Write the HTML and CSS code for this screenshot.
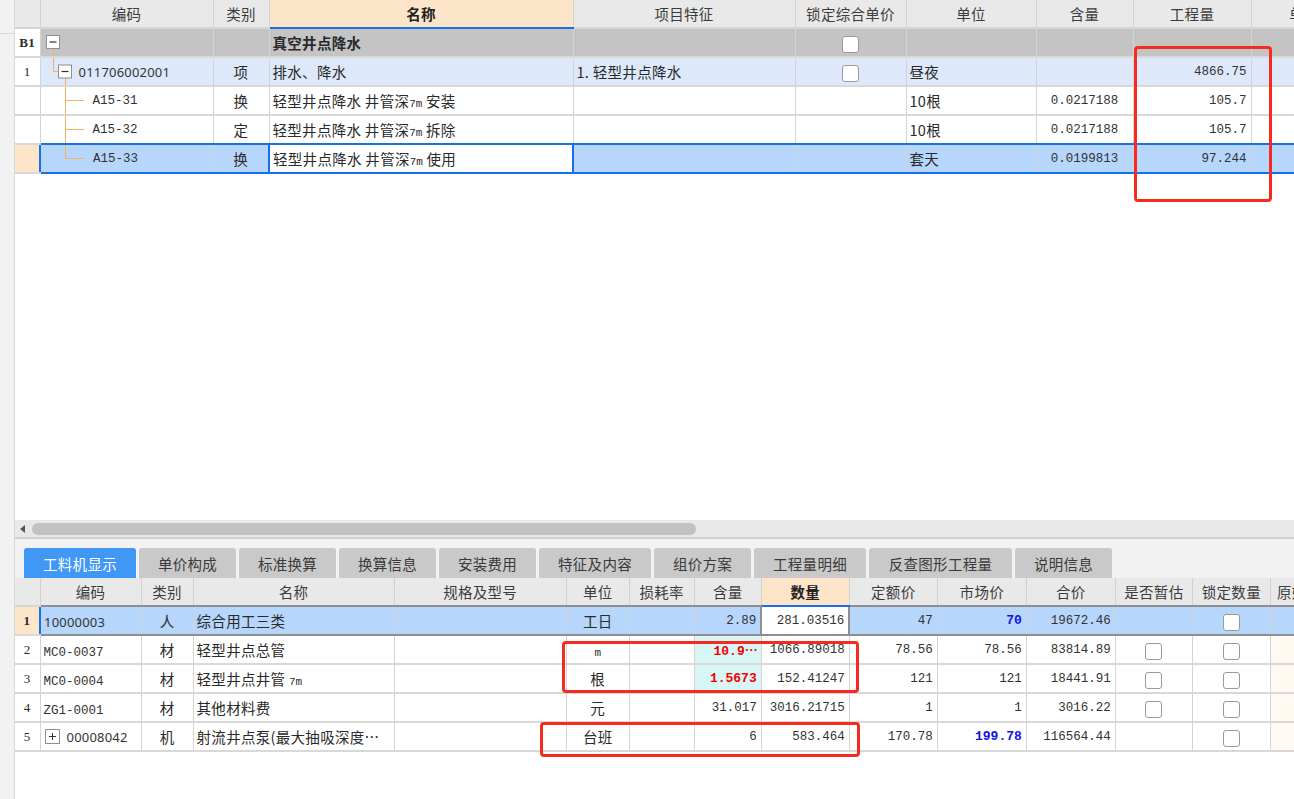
FILE: index.html
```html
<!DOCTYPE html>
<html lang="zh">
<head>
<meta charset="utf-8">
<title>工料机显示</title>
<link rel="stylesheet" href="styles.css">
</head>
<body>
<div class="app">
  <div class="side"><div class="side-top"></div></div>
  <div class="main">
    <div class="top-pane">
      <table class="grid top">
        <colgroup>
          <col style="width:25px"><col style="width:173px"><col style="width:56px"><col style="width:304px"><col style="width:222px"><col style="width:111px"><col style="width:130px"><col style="width:97px"><col style="width:118px"><col style="width:106px">
        </colgroup>
        <thead>
          <tr>
            <th class="rn"></th><th>编码</th><th>类别</th><th class="hot">名称</th><th>项目特征</th><th>锁定综合单价</th><th>单位</th><th>含量</th><th>工程量</th><th>单价</th>
          </tr>
        </thead>
        <tbody>
          <tr class="grp">
            <td class="rn b">B1</td>
            <td class="tree"><div class="tc"><svg width="22" height="27" viewBox="0 0 22 27"><line x1="12.5" y1="19" x2="12.5" y2="29" class="tl"/><rect x="5.5" y="6.5" width="13" height="13" class="bx"/><line x1="8.5" y1="13" x2="15.5" y2="13" class="mk"/></svg></div></td>
            <td></td><td class="name b">真空井点降水</td><td></td><td class="c"><span class="cb"></span></td><td></td><td></td><td></td><td></td>
          </tr>
          <tr class="item">
            <td class="rn">1</td>
            <td class="tree"><div class="tc"><svg width="38" height="27" viewBox="0 0 38 27"><line x1="12.5" y1="-2" x2="12.5" y2="13.5" class="tl"/><line x1="12.5" y1="13.5" x2="17.5" y2="13.5" class="tl"/><line x1="24.5" y1="20" x2="24.5" y2="29" class="tl"/><rect x="17.5" y="7" width="13" height="13" class="bx"/><line x1="20.5" y1="13.5" x2="27.5" y2="13.5" class="mk"/></svg><span class="code">011706002001</span></div></td>
            <td class="c">项</td><td class="name">排水、降水</td><td class="name">1. 轻型井点降水</td><td class="c"><span class="cb"></span></td><td class="name">昼夜</td><td></td><td class="num">4866.75</td><td></td>
          </tr>
          <tr>
            <td class="rn"></td>
            <td class="tree"><div class="tc"><svg width="52" height="27" viewBox="0 0 52 27"><line x1="24.5" y1="-2" x2="24.5" y2="29" class="tl"/><line x1="24.5" y1="13.5" x2="43" y2="13.5" class="tl"/></svg><span class="mono">A15-31</span></div></td>
            <td class="c">换</td><td class="name">轻型井点降水 井管深<span class="sm">7m</span> 安装</td><td></td><td></td><td class="name">10根</td><td class="num c">0.0217188</td><td class="num">105.7</td><td></td>
          </tr>
          <tr class="before-sel">
            <td class="rn"></td>
            <td class="tree"><div class="tc"><svg width="52" height="27" viewBox="0 0 52 27"><line x1="24.5" y1="-2" x2="24.5" y2="29" class="tl"/><line x1="24.5" y1="13.5" x2="43" y2="13.5" class="tl"/></svg><span class="mono">A15-32</span></div></td>
            <td class="c">定</td><td class="name">轻型井点降水 井管深<span class="sm">7m</span> 拆除</td><td></td><td></td><td class="name">10根</td><td class="num c">0.0217188</td><td class="num">105.7</td><td></td>
          </tr>
          <tr class="sel">
            <td class="rn cur"></td>
            <td class="tree first"><div class="tc"><svg width="52" height="27" viewBox="0 0 52 27"><line x1="24.5" y1="-2" x2="24.5" y2="13.5" class="tl"/><line x1="24.5" y1="13.5" x2="43" y2="13.5" class="tl"/></svg><span class="mono">A15-33</span></div></td>
            <td class="c">换</td><td class="name edit">轻型井点降水 井管深<span class="sm">7m</span> 使用</td><td></td><td></td><td class="name">套天</td><td class="num c">0.0199813</td><td class="num">97.244</td><td></td>
          </tr>
        </tbody>
      </table>
    </div>

    <div class="hscroll"><span class="arrow"></span><div class="thumb"></div></div>

    <div class="tabs">
      <div class="tab active">工料机显示</div>
      <div class="tab">单价构成</div>
      <div class="tab">标准换算</div>
      <div class="tab">换算信息</div>
      <div class="tab">安装费用</div>
      <div class="tab w112">特征及内容</div>
      <div class="tab">组价方案</div>
      <div class="tab w112">工程量明细</div>
      <div class="tab w143">反查图形工程量</div>
      <div class="tab">说明信息</div>
    </div>

    <div class="bottom-pane">
      <table class="grid bottom">
        <colgroup>
          <col style="width:25px"><col style="width:101px"><col style="width:52px"><col style="width:201px"><col style="width:172px"><col style="width:63px"><col style="width:65px"><col style="width:67px"><col style="width:88px"><col style="width:88px"><col style="width:89px"><col style="width:89px"><col style="width:77px"><col style="width:78px"><col style="width:72px">
        </colgroup>
        <thead>
          <tr>
            <th class="rn"></th><th>编码</th><th>类别</th><th>名称</th><th>规格及型号</th><th>单位</th><th>损耗率</th><th>含量</th><th class="hot">数量</th><th>定额价</th><th>市场价</th><th>合价</th><th>是否暂估</th><th>锁定数量</th><th class="clip">原始含量</th>
          </tr>
        </thead>
        <tbody>
          <tr class="bsel">
            <td class="rn cur b">1</td>
            <td class="name first"><span class="code">10000003</span></td><td class="c">人</td><td class="name">综合用工三类</td><td></td><td class="c">工日</td><td></td><td class="num">2.89</td><td class="num qty">281.03516</td><td class="num">47</td><td class="num blue">70</td><td class="num">19672.46</td><td></td><td class="c"><span class="cb"></span></td><td></td>
          </tr>
          <tr>
            <td class="rn">2</td>
            <td class="name"><span class="mono">MC0-0037</span></td><td class="c">材</td><td class="name">轻型井点总管</td><td></td><td class="c"><span class="sm">m</span></td><td></td><td class="num red cy">10.9<span class="ell">…</span></td><td class="num">1066.89018</td><td class="num">78.56</td><td class="num">78.56</td><td class="num">83814.89</td><td class="c"><span class="cb"></span></td><td class="c"><span class="cb"></span></td><td class="pale"></td>
          </tr>
          <tr>
            <td class="rn">3</td>
            <td class="name"><span class="mono">MC0-0004</span></td><td class="c">材</td><td class="name">轻型井点井管 <span class="sm">7m</span></td><td></td><td class="c">根</td><td></td><td class="num red cy">1.5673</td><td class="num">152.41247</td><td class="num">121</td><td class="num">121</td><td class="num">18441.91</td><td class="c"><span class="cb"></span></td><td class="c"><span class="cb"></span></td><td class="pale"></td>
          </tr>
          <tr>
            <td class="rn">4</td>
            <td class="name"><span class="mono">ZG1-0001</span></td><td class="c">材</td><td class="name">其他材料费</td><td></td><td class="c">元</td><td></td><td class="num">31.017</td><td class="num">3016.21715</td><td class="num">1</td><td class="num">1</td><td class="num">3016.22</td><td class="c"><span class="cb"></span></td><td class="c"><span class="cb"></span></td><td class="pale"></td>
          </tr>
          <tr>
            <td class="rn">5</td>
            <td class="name"><div class="tc"><span class="plus"></span><span class="code">00008042</span></div></td><td class="c">机</td><td class="name">射流井点泵(最大抽吸深度…</td><td></td><td class="c">台班</td><td></td><td class="num">6</td><td class="num">583.464</td><td class="num">170.78</td><td class="num blue">199.78</td><td class="num">116564.44</td><td></td><td class="c"><span class="cb"></span></td><td class="pale"></td>
          </tr>
        </tbody>
      </table>
    </div>
  </div>

  <div class="mark m1"></div>
  <div class="mark m2"></div>
  <div class="mark m3"></div>
</div>
</body>
</html>
```

FILE: styles.css
```css
* { box-sizing: border-box; }
html, body { margin: 0; padding: 0; background: #fff; }
body {
  font-family: "Noto Sans CJK SC", "Noto Sans", sans-serif;
  font-size: 14.5px;
  color: #2a2a2a;
  width: 1294px;
  height: 799px;
  overflow: hidden;
}
.app {
  position: relative;
  display: flex;
  width: 1294px;
  height: 799px;
}
.side {
  width: 15px;
  flex: none;
  background: #f2f2f2;
  border-right: 1px solid #d9d9d9;
}
.side-top { height: 34px; border-bottom: 1px solid #d6d6d6; }
.main {
  flex: 1;
  min-width: 0;
  display: flex;
  flex-direction: column;
  overflow: hidden;
}
.top-pane { height: 520px; flex: none; overflow: hidden; background: #fff; }

.grid {
  border-collapse: collapse;
  table-layout: fixed;
}
.grid.top { width: 1342px; }
.grid.bottom { width: 1328px; }
.grid th {
  height: 28px;
  padding: 0;
  background: #e9e9e9;
  font-weight: normal;
  color: #3c3c3c;
  letter-spacing: 0.3px;
  border-right: 1px solid #d2d2d2;
  border-bottom: 2px solid #d6d6d6;
  white-space: nowrap;
  overflow: hidden;
}
.grid th.hot {
  background: #fde5c9;
  font-weight: bold;
  color: #222;
  border-bottom: 2px solid #1b6fe6;
}
.grid td {
  height: 29px;
  padding: 0 4px;
  border-right: 1px solid #d4d4d4;
  border-bottom: 2px solid #d8d8d8;
  white-space: nowrap;
  overflow: hidden;
  letter-spacing: 0.3px;
}
.grid td.rn {
  text-align: center;
  font-family: "Liberation Serif", serif;
  font-size: 13px;
  padding: 0;
  background: #fff;
}
.grid td.rn.cur { background: #fde5c9; }
.b { font-weight: bold; }
.c { text-align: center; }
.grid td.tree { padding: 0; }
.tc { display: flex; align-items: center; height: 27px; }
.tc svg { flex: none; display: block; overflow: visible; }
.tl { stroke: #f3b262; stroke-width: 1; }
.bx { fill: #fff; stroke: #8f8f8f; stroke-width: 1; }
.mk { stroke: #333; stroke-width: 1.2; }
.code { font-family: "Noto Sans", sans-serif; font-size: 13px; letter-spacing: 0.2px; color: #333; }
.mono { font-family: "Liberation Mono", monospace; font-size: 12.5px; letter-spacing: 0; color: #333; }
.sm { font-family: "Liberation Mono", monospace; font-size: 11px; letter-spacing: 0; }
.num {
  font-family: "Liberation Mono", monospace;
  font-size: 12.5px;
  letter-spacing: 0 !important;
  text-align: right;
  color: #333;
}
.num.c { text-align: center; }
.ell { font-family: "Noto Sans CJK SC", sans-serif; font-weight: bold; letter-spacing: -1px; }
.grid td.name { padding-left: 3px; }

/* top rows */
.top tr.grp td:not(.rn) { background: #c4c4c4; }
.top tr.item td:not(.rn) { background: #dde9fb; }
.top tr.sel td:not(.rn) {
  background: #b6d6fc;
  border-top: 2px solid #1b6fe6;
  border-bottom: 2px solid #1b6fe6;
}
.top tr.before-sel td:not(.rn) { border-bottom-color: #1b6fe6; }
.top tr.sel td.first { border-left: 2px solid #1b6fe6; }
.top tr.sel td.edit {
  background: #fff;
  border-left: 2px solid #1b6fe6;
  border-right: 2px solid #1b6fe6;
}

.cb {
  display: inline-block;
  width: 17px;
  height: 17px;
  border: 1px solid #9a9a9a;
  border-radius: 3px;
  background: #fff;
  vertical-align: middle;
}

/* horizontal scrollbar */
.hscroll {
  flex: none;
  background: #e8e8e8;
  display: flex;
  align-items: center;
  border-bottom: 2px solid #d0d0d0;
  height: 19px;
}
.arrow {
  width: 0; height: 0;
  margin-left: 5px;
  border-top: 4px solid transparent;
  border-bottom: 4px solid transparent;
  border-right: 5px solid #555;
}
.thumb {
  margin-left: 7px;
  width: 664px;
  height: 12px;
  border-radius: 6px;
  background: #c2c2c2;
}

/* tabs */
.tabs {
  height: 39px;
  flex: none;
  background: #f2f2f2;
  display: flex;
  align-items: flex-end;
  gap: 3px;
  padding-left: 9px;
}
.tab {
  width: 97px;
  height: 30px;
  background: #c9c9c9;
  border-radius: 3px 3px 0 0;
  color: #3a3a3a;
  letter-spacing: 0.3px;
  display: flex;
  align-items: center;
  justify-content: center;
}
.tab.active { width: 112px; background: #3f97f6; color: #fff; }
.tab.w112 { width: 112px; }
.tab.w143 { width: 143px; }

/* bottom table */
.bottom-pane { flex: 1; overflow: hidden; background: #fff; }
.bottom th { border-bottom: 2px solid #8e8e8e; }
.bottom th.rn { border-bottom: 2px solid #d6d6d6; }
.bottom th.hot { border-bottom: 2px solid #1b6fe6; }
.bottom th.clip { text-align: left; padding-left: 6px; }
.bottom tr.bsel td:not(.rn) {
  background: #b6d6fc;
  border-bottom: 2px solid #8e8e8e;
}
.bottom tr.bsel td.first { border-left: 2px solid #1b6fe6; }
.bottom tr.bsel td.qty {
  background: #fff;
  border: 2px solid #8e8e8e;
}
.bottom td.cy { background: #d9f6f6; }
.red { color: #f20000 !important; font-weight: bold; font-size: 13px; }
.blue { color: #1212e6 !important; font-weight: bold; font-size: 13px; }
.bottom td.pale { background: #fff9f2; }
.plus {
  position: relative;
  flex: none;
  width: 15px;
  height: 15px;
  border: 1px solid #8f8f8f;
  background: #fff;
  margin-right: 7px;
  margin-left: 1px;
}
.plus::before, .plus::after {
  content: "";
  position: absolute;
  background: #333;
}
.plus::before { left: 3px; right: 3px; top: 6px; height: 1px; }
.plus::after { top: 3px; bottom: 3px; left: 6px; width: 1px; }

/* annotation marks */
.mark {
  position: absolute;
  border: 3px solid #f52b1f;
  border-radius: 4px;
  pointer-events: none;
}
.m1 { left: 1134px; top: 46px; width: 138px; height: 156px; }
.m2 { left: 562px; top: 641px; width: 297px; height: 52px; }
.m3 { left: 540px; top: 722px; width: 320px; height: 35px; }
```
